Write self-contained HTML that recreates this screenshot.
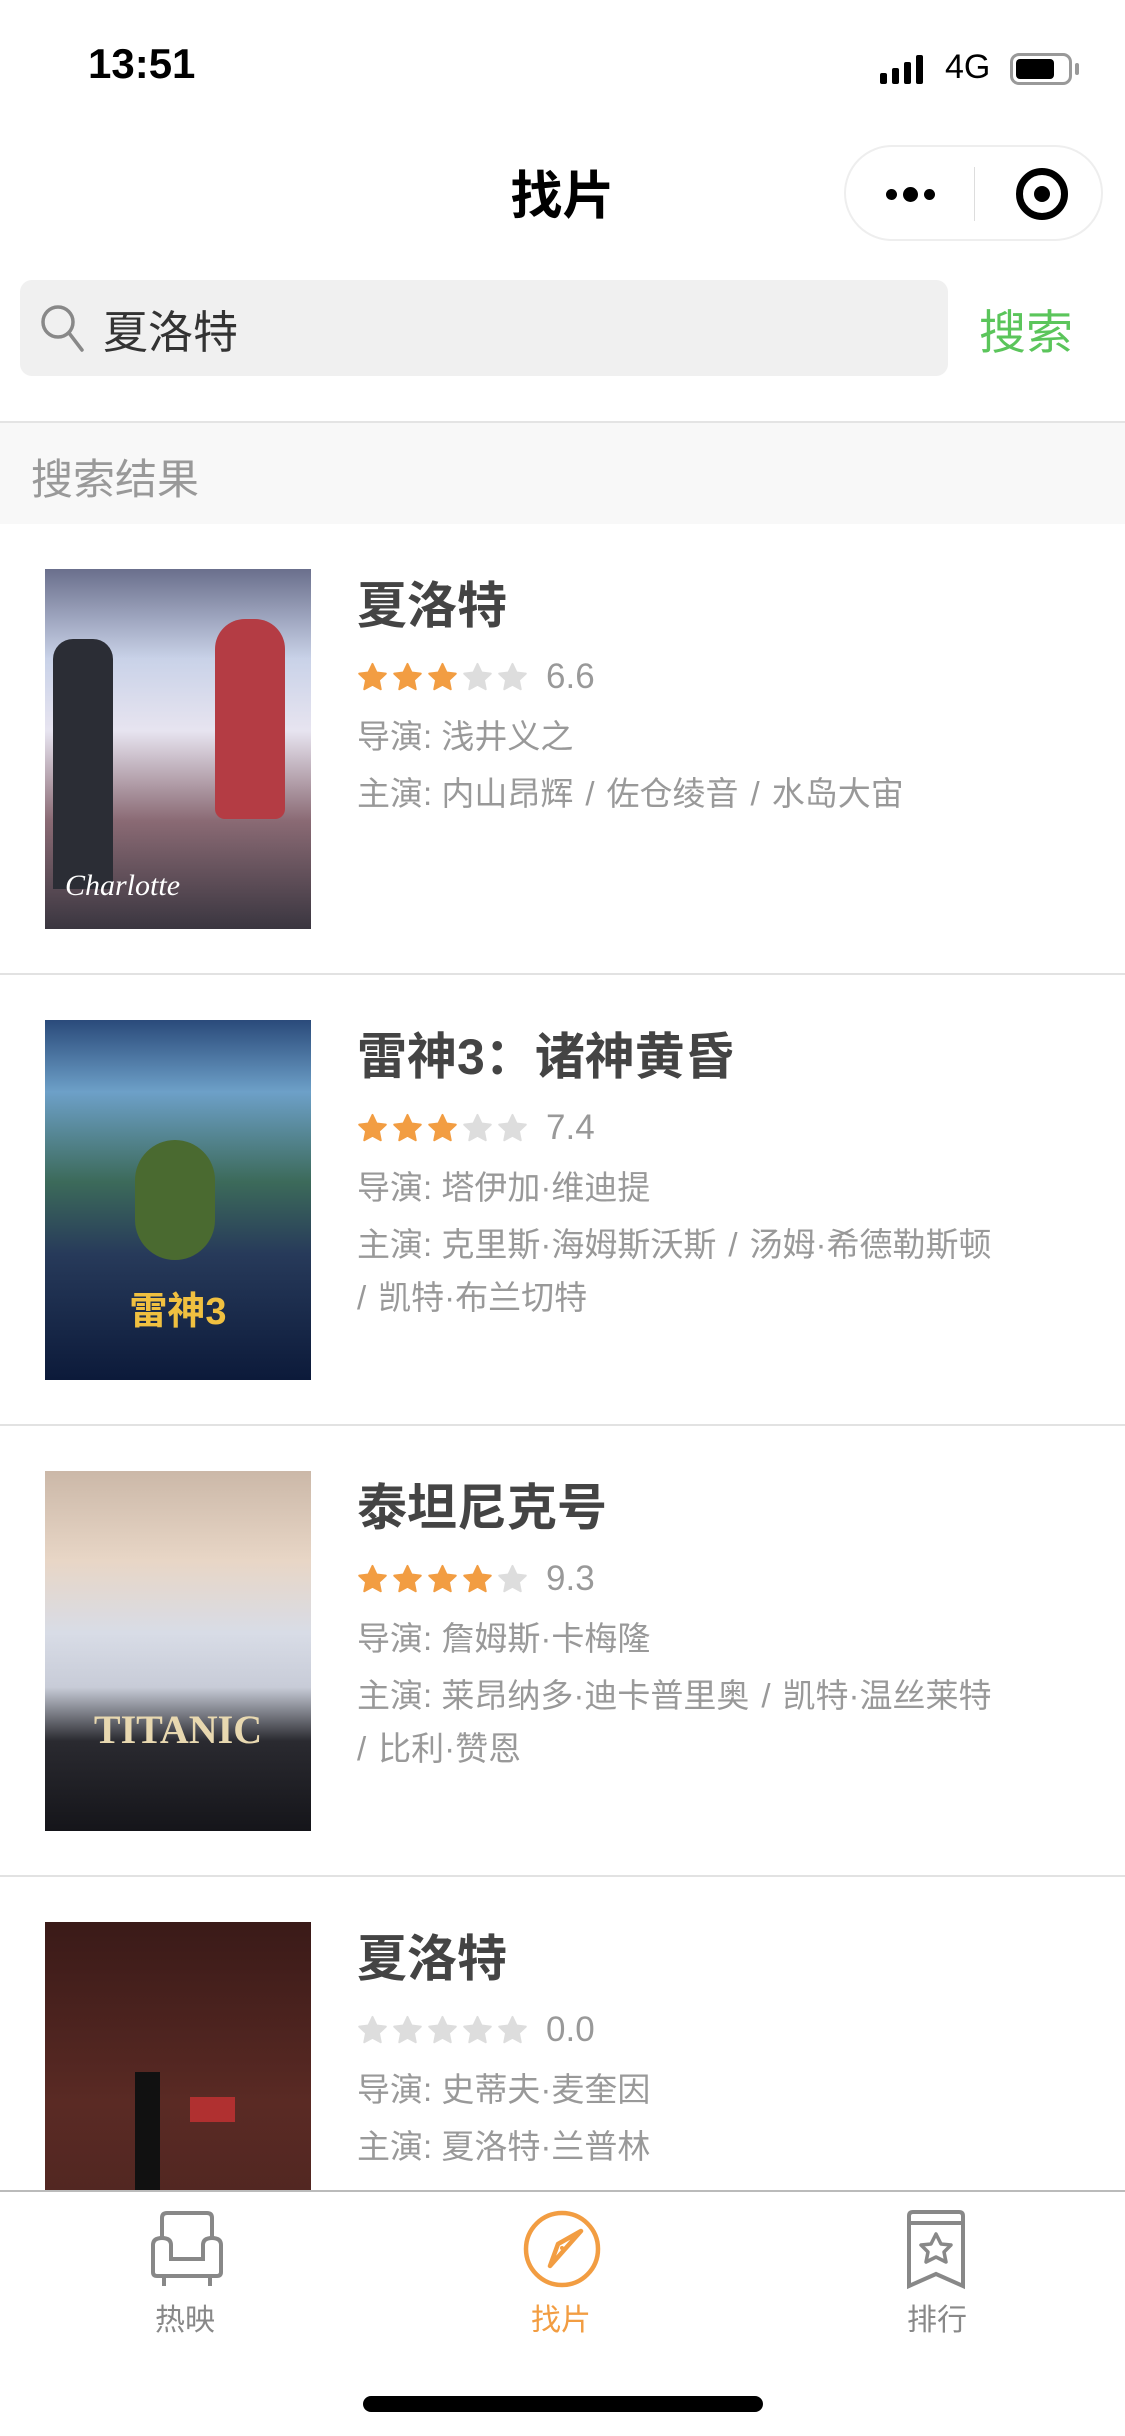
<!DOCTYPE html>
<html><head><meta charset="utf-8"><style>
*{margin:0;padding:0;box-sizing:border-box}
body{width:1125px;height:2436px;background:#fff;font-family:"Liberation Sans","Noto Sans CJK SC",sans-serif;position:relative;overflow:hidden}
.abs{position:absolute}
.item{position:absolute;left:0;width:1125px;height:451px;border-bottom:2px solid #e2e2e2}
.poster{position:absolute;left:45px;top:45px;width:266px;height:360px}
.t{position:absolute;left:357px;top:52px;font-size:50px;font-weight:bold;color:#444;line-height:60px;white-space:nowrap}
.stars{position:absolute;left:357px;top:133px;height:40px;display:flex;align-items:center}
.stars svg{width:31px;height:31px;margin-right:4px}
.stars span{font-size:35px;color:#999;margin-left:14px}
.d{position:absolute;left:357px;font-size:33px;color:#999;line-height:52px;white-space:nowrap}
.d i{font-style:normal;margin:0 12px}
</style></head><body>
<div class="abs" style="left:88px;top:40px;font-size:42px;font-weight:bold;color:#000">13:51</div>
<div class="abs" style="left:880px;top:54px;display:flex;align-items:flex-end;gap:5px;height:30px">
<div style="width:7px;height:11px;background:#000;border-radius:2px"></div><div style="width:7px;height:16px;background:#000;border-radius:2px"></div><div style="width:7px;height:22px;background:#000;border-radius:2px"></div><div style="width:7px;height:29px;background:#000;border-radius:2px"></div></div>
<div class="abs" style="left:945px;top:48px;font-size:34px;color:#000">4G</div>
<div class="abs" style="left:1010px;top:53px;width:62px;height:32px;border:3px solid #999;border-radius:9px;padding:3px"><div style="width:38px;height:100%;background:#000;border-radius:4px"></div></div>
<div class="abs" style="left:1075px;top:63px;width:4px;height:12px;background:#999;border-radius:2px"></div>
<div class="abs" style="left:0;width:1125px;top:154px;text-align:center;font-size:52px;font-weight:bold;color:#000">找片</div>
<div class="abs" style="left:844px;top:145px;width:259px;height:96px;border:2px solid #eee;border-radius:48px;background:#fff">
<div class="abs" style="left:40px;top:40px;display:flex;gap:6px;align-items:center"><div style="width:11px;height:11px;border-radius:50%;background:#000"></div><div style="width:15px;height:15px;border-radius:50%;background:#000"></div><div style="width:11px;height:11px;border-radius:50%;background:#000"></div></div>
<div class="abs" style="left:128px;top:20px;width:1px;height:54px;background:#ddd"></div>
<div class="abs" style="left:170px;top:21px;width:52px;height:52px;border:7px solid #000;border-radius:50%"><div style="position:absolute;left:11px;top:11px;width:16px;height:16px;background:#000;border-radius:50%"></div></div>
</div>
<div class="abs" style="left:20px;top:280px;width:928px;height:96px;background:#f0f0f0;border-radius:12px"></div>
<svg class="abs" style="left:38px;top:302px" width="48" height="52" viewBox="0 0 48 52"><circle cx="20" cy="20" r="15" fill="none" stroke="#888" stroke-width="3.5"/><line x1="31" y1="31" x2="44" y2="48" stroke="#888" stroke-width="3.5" stroke-linecap="round"/></svg>
<div class="abs" style="left:103px;top:296px;font-size:45px;color:#333">夏洛特</div>
<div class="abs" style="left:979px;top:294px;font-size:47px;color:#5bc55b">搜索</div>
<div class="abs" style="left:0;top:421px;width:1125px;height:103px;background:#f8f8f8;border-top:2px solid #e4e4e4"></div>
<div class="abs" style="left:31px;top:446px;font-size:42px;color:#999">搜索结果</div>

<svg width="0" height="0" style="position:absolute"><defs><path id="st" d="M12 1.5l3.1 6.6 7.2.9-5.3 5 1.4 7.1L12 17.6l-6.4 3.5L7 14 1.7 9l7.2-.9z" stroke-linejoin="round" stroke-width="1.5"/></defs></svg>

<div class="item" style="top:524px">
<div class="poster" style="background:linear-gradient(180deg,#6a6f8c 0%,#c9d2e8 25%,#e7e4f0 45%,#8a6a74 70%,#3a3640 100%)">
<div style="position:absolute;left:8px;top:70px;width:60px;height:250px;background:#2b2d35;border-radius:20px 20px 0 0"></div>
<div style="position:absolute;left:170px;top:50px;width:70px;height:200px;background:#b43c44;border-radius:30px 30px 10px 10px"></div>
<div style="position:absolute;left:20px;top:300px;color:#fff;font-size:30px;font-family:'Liberation Serif',serif;font-style:italic">Charlotte</div></div>
<div class="t">夏洛特</div>
<div class="stars"><svg viewBox="0 0 24 24"><use href="#st" fill="#f29d42" stroke="#f29d42"/></svg><svg viewBox="0 0 24 24"><use href="#st" fill="#f29d42" stroke="#f29d42"/></svg><svg viewBox="0 0 24 24"><use href="#st" fill="#f29d42" stroke="#f29d42"/></svg><svg viewBox="0 0 24 24"><use href="#st" fill="#ddd" stroke="#ddd"/></svg><svg viewBox="0 0 24 24"><use href="#st" fill="#ddd" stroke="#ddd"/></svg><span>6.6</span></div>
<div class="d" style="top:187px">导演: 浅井义之</div>
<div class="d" style="top:244px">主演: 内山昂辉<i>/</i>佐仓绫音<i>/</i>水岛大宙</div>
</div>

<div class="item" style="top:975px">
<div class="poster" style="background:linear-gradient(180deg,#2a4a7a 0%,#6da0c8 20%,#3c6a5a 45%,#273a5a 65%,#0c1a3a 100%)">
<div style="position:absolute;left:90px;top:120px;width:80px;height:120px;background:#4a6a30;border-radius:40px"></div>
<div style="position:absolute;left:0;top:260px;width:266px;text-align:center;color:#f0c040;font-size:38px;font-weight:bold">雷神3</div></div>
<div class="t">雷神3：诸神黄昏</div>
<div class="stars"><svg viewBox="0 0 24 24"><use href="#st" fill="#f29d42" stroke="#f29d42"/></svg><svg viewBox="0 0 24 24"><use href="#st" fill="#f29d42" stroke="#f29d42"/></svg><svg viewBox="0 0 24 24"><use href="#st" fill="#f29d42" stroke="#f29d42"/></svg><svg viewBox="0 0 24 24"><use href="#st" fill="#ddd" stroke="#ddd"/></svg><svg viewBox="0 0 24 24"><use href="#st" fill="#ddd" stroke="#ddd"/></svg><span>7.4</span></div>
<div class="d" style="top:187px">导演: 塔伊加·维迪提</div>
<div class="d" style="top:244px">主演: 克里斯·海姆斯沃斯<i>/</i>汤姆·希德勒斯顿</div>
<div class="d" style="top:297px">/<i style="margin:0 6px"></i>凯特·布兰切特</div>
</div>

<div class="item" style="top:1426px">
<div class="poster" style="background:linear-gradient(180deg,#cbb8a8 0%,#e8d6c6 25%,#d8dce6 45%,#c8ccd8 60%,#2a2a30 75%,#15151a 100%)">
<div style="position:absolute;left:0;top:235px;width:266px;text-align:center;color:#e8d8b0;font-size:40px;font-weight:bold;font-family:'Liberation Serif',serif">TITANIC</div></div>
<div class="t">泰坦尼克号</div>
<div class="stars"><svg viewBox="0 0 24 24"><use href="#st" fill="#f29d42" stroke="#f29d42"/></svg><svg viewBox="0 0 24 24"><use href="#st" fill="#f29d42" stroke="#f29d42"/></svg><svg viewBox="0 0 24 24"><use href="#st" fill="#f29d42" stroke="#f29d42"/></svg><svg viewBox="0 0 24 24"><use href="#st" fill="#f29d42" stroke="#f29d42"/></svg><svg viewBox="0 0 24 24"><use href="#st" fill="#ddd" stroke="#ddd"/></svg><span>9.3</span></div>
<div class="d" style="top:187px">导演: 詹姆斯·卡梅隆</div>
<div class="d" style="top:244px">主演: 莱昂纳多·迪卡普里奥<i>/</i>凯特·温丝莱特</div>
<div class="d" style="top:297px">/<i style="margin:0 6px"></i>比利·赞恩</div>
</div>

<div class="item" style="top:1877px;border:none">
<div class="poster" style="background:linear-gradient(180deg,#3a1a18 0%,#5a2a24 50%,#4a2420 100%)">
<div style="position:absolute;left:90px;top:150px;width:25px;height:210px;background:#111"></div>
<div style="position:absolute;left:145px;top:175px;width:45px;height:25px;background:#b03030"></div></div>
<div class="t">夏洛特</div>
<div class="stars"><svg viewBox="0 0 24 24"><use href="#st" fill="#ddd" stroke="#ddd"/></svg><svg viewBox="0 0 24 24"><use href="#st" fill="#ddd" stroke="#ddd"/></svg><svg viewBox="0 0 24 24"><use href="#st" fill="#ddd" stroke="#ddd"/></svg><svg viewBox="0 0 24 24"><use href="#st" fill="#ddd" stroke="#ddd"/></svg><svg viewBox="0 0 24 24"><use href="#st" fill="#ddd" stroke="#ddd"/></svg><span>0.0</span></div>
<div class="d" style="top:187px">导演: 史蒂夫·麦奎因</div>
<div class="d" style="top:244px">主演: 夏洛特·兰普林</div>
</div>

<div class="abs" style="left:0;top:2190px;width:1125px;height:246px;background:#fff;border-top:2px solid #bbb"></div>
<svg class="abs" style="left:148px;top:2210px" width="78" height="80" viewBox="0 0 78 80" fill="none" stroke="#888" stroke-width="4"><path d="M14 28V8q0-5 5-5h40q5 0 5 5v20"/><path d="M14 28q-9 0-9 7v27q0 4 4 4h60q4 0 4-4V35q0-7-9-7t-9 7v14H23V35q0-7-9-7z"/><path d="M16 66v10M62 66v10"/></svg>
<div class="abs" style="left:155px;top:2295px;font-size:30px;color:#888">热映</div>
<svg class="abs" style="left:522px;top:2208px" width="80" height="82" viewBox="0 0 80 82" fill="none" stroke="#f29d42" stroke-width="4.5"><circle cx="40" cy="41" r="36"/><path d="M59 23L28 58l8-22z" stroke-linejoin="round"/><circle cx="40" cy="40" r="2" fill="#f29d42" stroke="none"/></svg>
<div class="abs" style="left:531px;top:2295px;font-size:30px;color:#f29d42">找片</div>
<svg class="abs" style="left:905px;top:2210px" width="62" height="80" viewBox="0 0 62 80" fill="none" stroke="#888" stroke-width="4"><path d="M4 6q0-4 4-4h46q4 0 4 4v70L31 64 4 76z"/><path d="M4 13h54"/><path d="M31 24l5 10 10 1-7 7 2 10-10-5-10 5 2-10-7-7 10-1z" stroke-linejoin="round" stroke-width="3.5"/></svg>
<div class="abs" style="left:907px;top:2295px;font-size:30px;color:#888">排行</div>
<div class="abs" style="left:363px;top:2396px;width:400px;height:16px;background:#000;border-radius:8px"></div>
</body></html>
